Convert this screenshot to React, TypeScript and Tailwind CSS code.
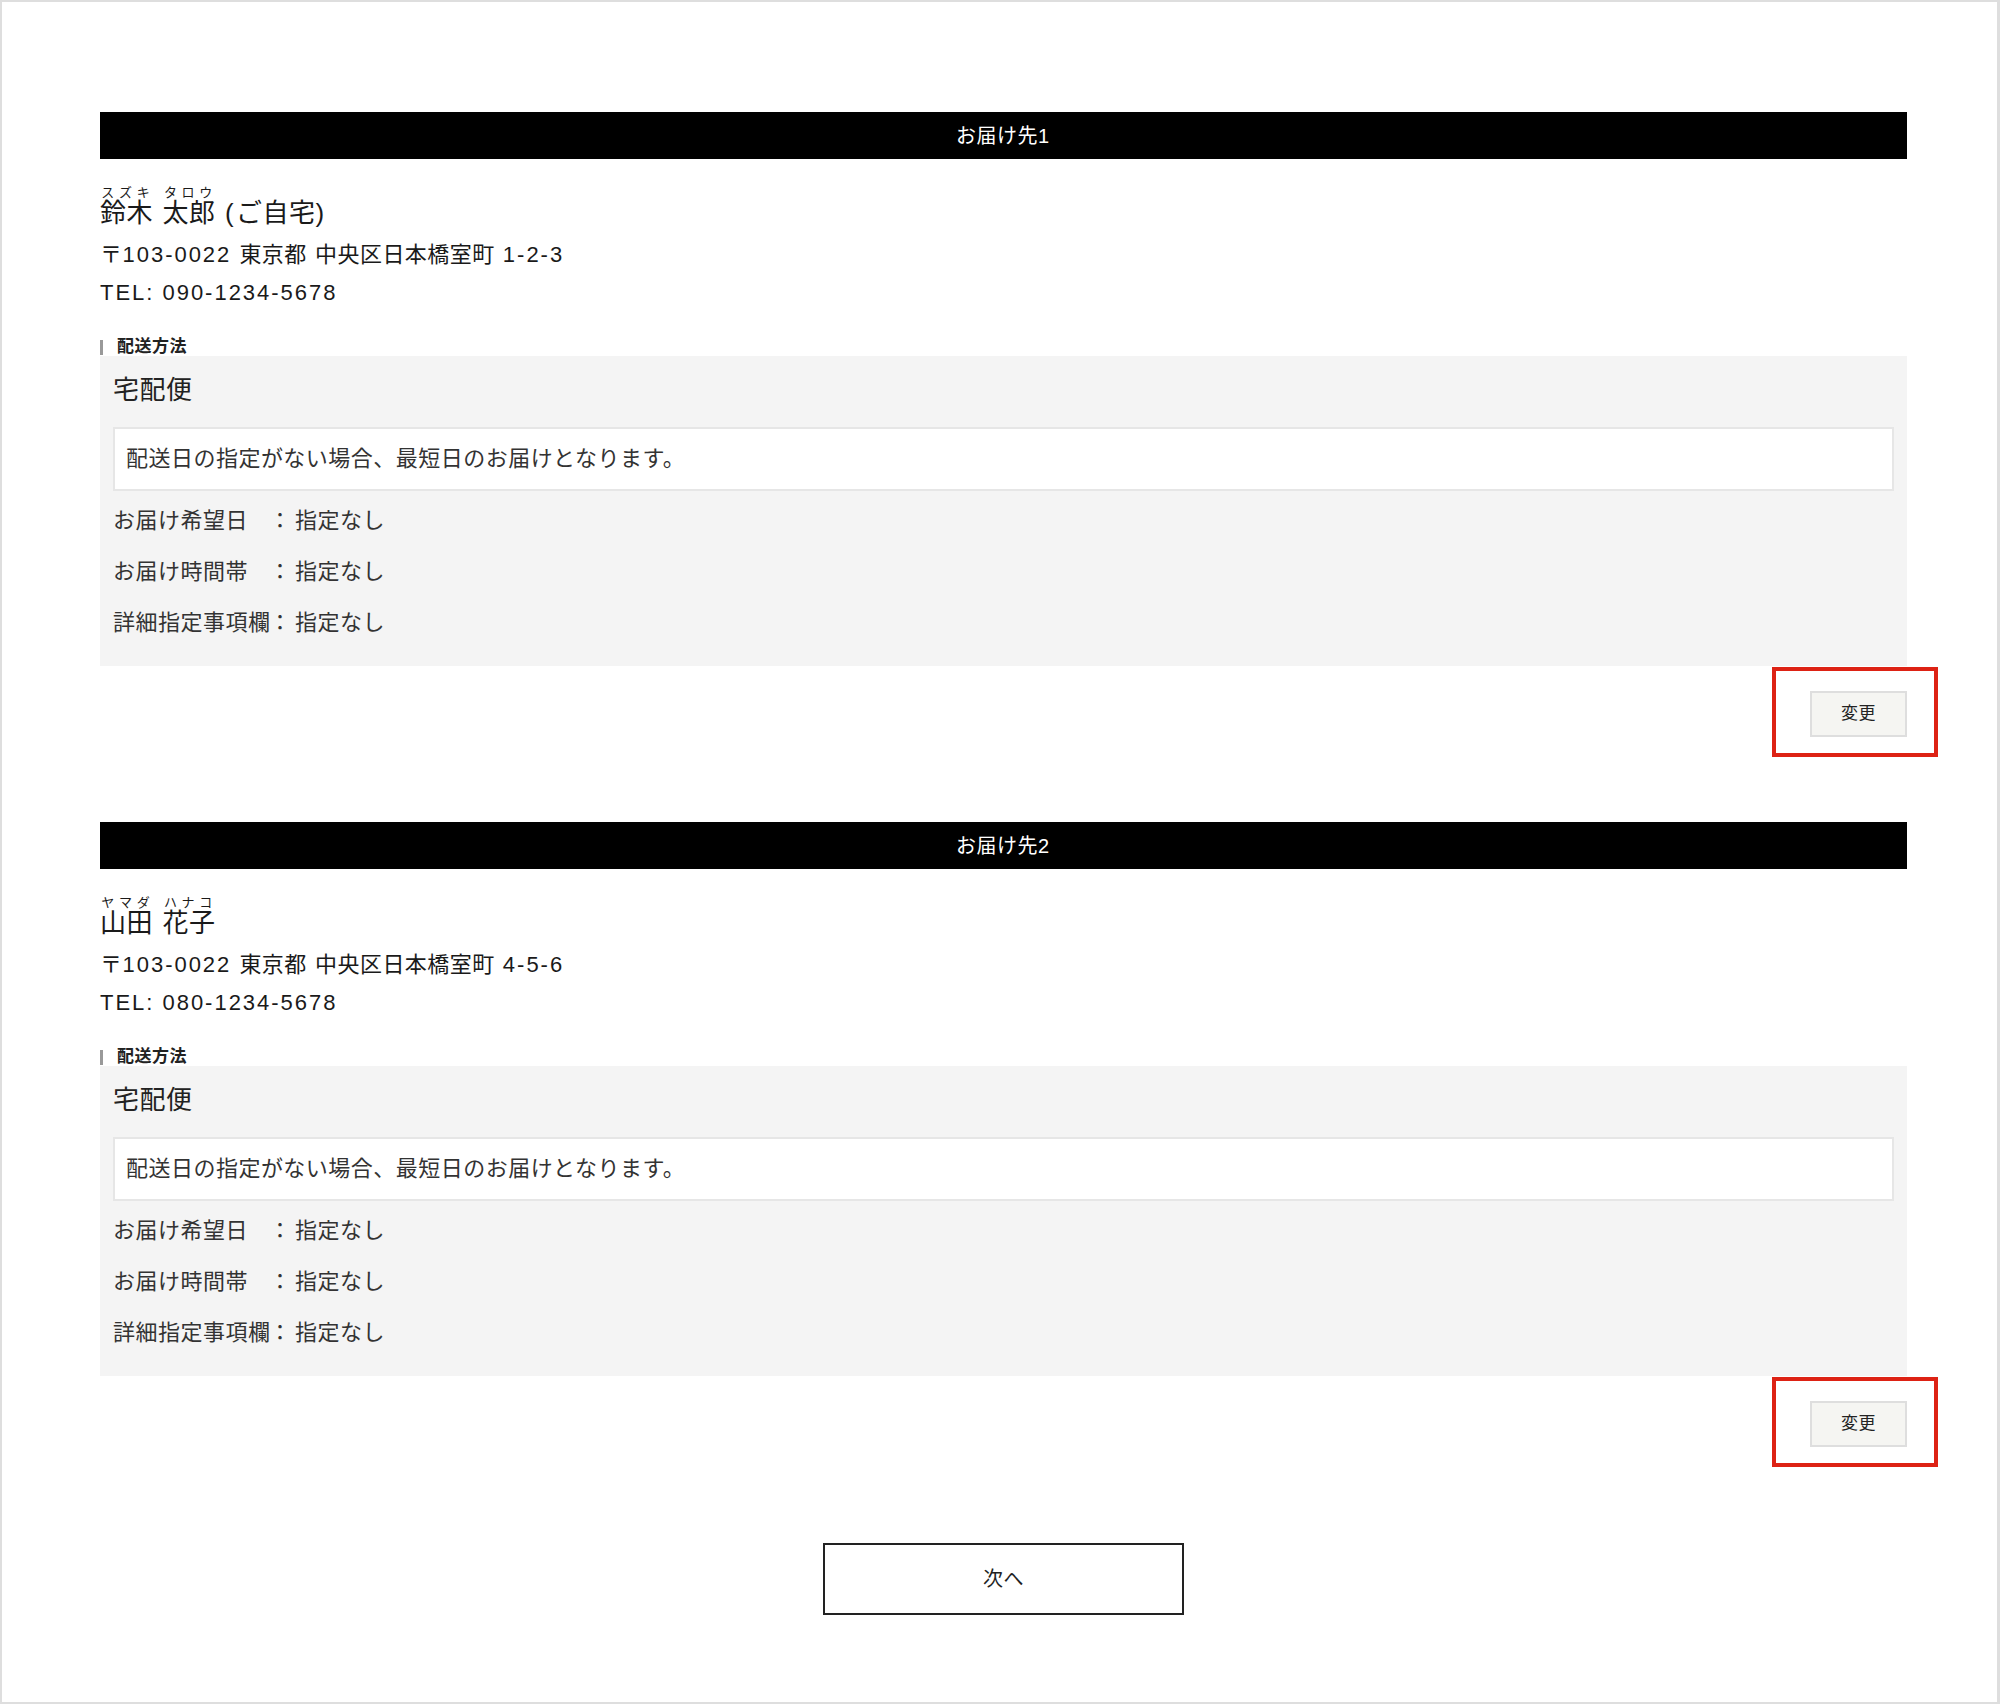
import React from 'react';

const destinations = [
  {
    title: 'お届け先1',
    kana: ['スズキ', 'タロウ'],
    name: ['鈴木', '太郎'],
    suffix: ' (ご自宅)',
    address: '〒103-0022 東京都 中央区日本橋室町 1-2-3',
    tel: 'TEL: 090-1234-5678',
  },
  {
    title: 'お届け先2',
    kana: ['ヤマダ', 'ハナコ'],
    name: ['山田', '花子'],
    suffix: '',
    address: '〒103-0022 東京都 中央区日本橋室町 4-5-6',
    tel: 'TEL: 080-1234-5678',
  },
];

const rows = [
  { label: 'お届け希望日', value: '指定なし' },
  { label: 'お届け時間帯', value: '指定なし' },
  { label: '詳細指定事項欄', value: '指定なし' },
];

// latin runs are set a little looser, like the original's roman glyphs
function Mixed({ text }: { text: string }) {
  return (
    <>
      {text.split(/([ -~]+)/).map((part, i) =>
        /[ -~]/.test(part) ? (
          <span key={i} className="tracking-[0.09em]">{part}</span>
        ) : (
          part
        )
      )}
    </>
  );
}

function Destination({ d }: { d: (typeof destinations)[number] }) {
  return (
    <section>
      <div className="h-[47px] bg-black flex items-center justify-center text-white text-[20px]">
        <Mixed text={d.title} />
      </div>

      <div className="mt-[26px] text-[26px] leading-[30px] text-[#1a1a1a]">
        <ruby>
          {d.name[0]}
          <rt className="text-[13px] leading-none tracking-[0.15em]">{d.kana[0]}</rt>
        </ruby>
        <Mixed text=" " />
        <ruby>
          {d.name[1]}
          <rt className="text-[13px] leading-none tracking-[0.15em]">{d.kana[1]}</rt>
        </ruby>
        <Mixed text={d.suffix} />
      </div>
      <div className="mt-[8px] text-[22px] leading-[38px] text-[#1a1a1a]">
        <Mixed text={d.address} />
      </div>
      <div className="text-[22px] leading-[38px] text-[#1a1a1a]">
        <Mixed text={d.tel} />
      </div>

      <div className="mt-[26px] flex items-center">
        <span className="w-[3px] h-[15px] bg-[#999]" />
        <span className="pl-[14px] text-[17px] leading-[18px] font-bold text-[#222]">配送方法</span>
      </div>

      <div className="bg-[#f4f4f4] px-[13px] pt-[17px] pb-[28px]">
        <div className="text-[26px] leading-[34px] text-[#222]">宅配便</div>
        <div className="mt-[20px] bg-white border-2 border-[#e6e6e6] px-[11px] py-[15px] text-[22px] leading-[30px] text-[#333]">
          配送日の指定がない場合、最短日のお届けとなります。
        </div>
        <div className="mt-[15px] flex flex-col gap-[21px]">
          {rows.map(r => (
            <div key={r.label} className="flex text-[22px] leading-[30px] text-[#333] whitespace-nowrap">
              <span className="w-[156px] shrink-0">{r.label}</span>
              <span className="w-[26px] shrink-0">：</span>
              <span>{r.value}</span>
            </div>
          ))}
        </div>
      </div>

      <div className="mt-[25px] flex justify-end">
        <div className="relative">
          <button className="w-[97px] h-[46px] bg-[#f5f5f2] border-2 border-[#dedede] text-[17px] text-[#222]">
            変更
          </button>
          {/* annotation frame */}
          <div className="absolute -top-[24px] -left-[38px] -right-[31px] -bottom-[20px] border-[4px] border-[#dd2214] pointer-events-none" />
        </div>
      </div>
    </section>
  );
}

export default function App() {
  return (
    <div
      className="w-[2000px] h-[1704px] bg-white border-2 border-r-[3px] border-[#dedede] pl-[98px] pr-[90px] pt-[110px] tracking-[0.03em]"
      style={{ fontFamily: '"Liberation Sans", "Noto Sans CJK JP", sans-serif' }}
    >
      <div className="flex flex-col gap-[85px]">
        {destinations.map(d => (
          <Destination key={d.title} d={d} />
        ))}
      </div>

      <div className="mt-[96px] flex justify-center">
        <button className="w-[361px] h-[72px] border-2 border-[#222] bg-white text-[20px] text-[#222]">
          次へ
        </button>
      </div>
    </div>
  );
}
